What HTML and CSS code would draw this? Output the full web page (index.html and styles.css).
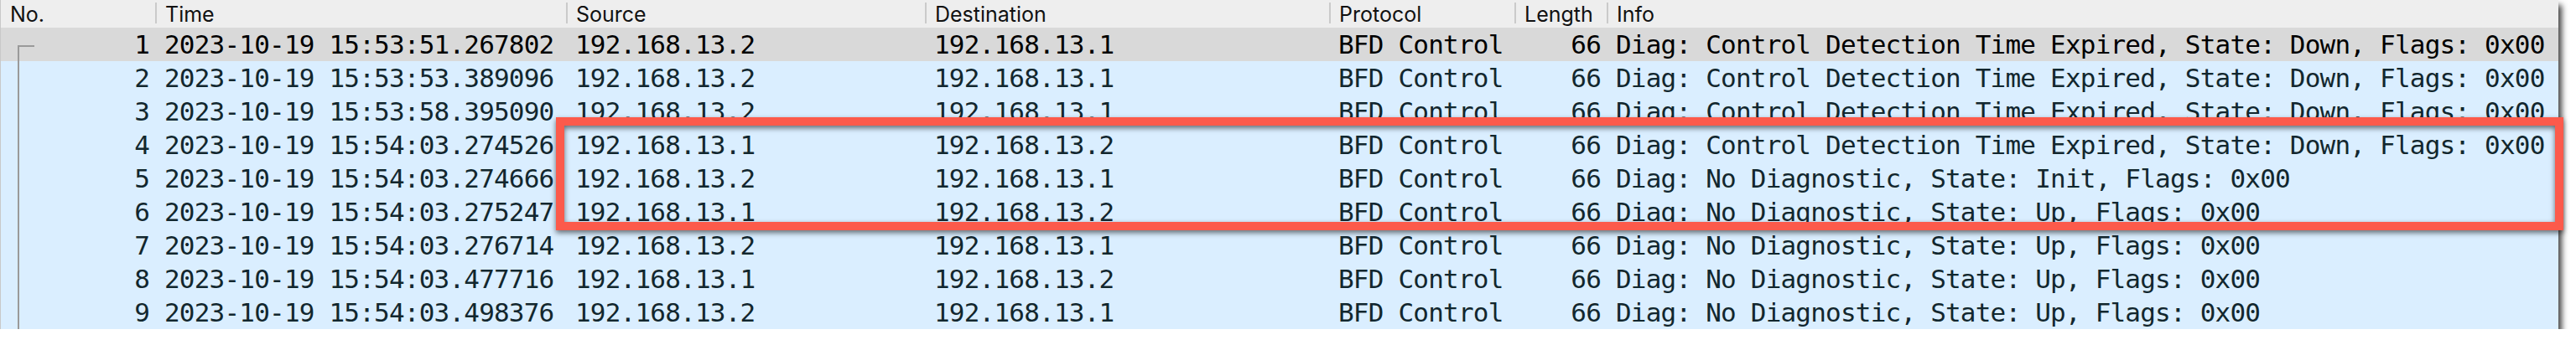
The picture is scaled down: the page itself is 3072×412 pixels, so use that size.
FILE: index.html
```html
<!DOCTYPE html>
<html>
<head>
<meta charset="utf-8">
<link rel="stylesheet" href="styles.css">
</head>
<body>
<div class="window">
  <div class="row head">
    <div class="hc">No.</div>
    <div class="hc sep">Time</div>
    <div class="hc sep">Source</div>
    <div class="hc sep">Destination</div>
    <div class="hc sep">Protocol</div>
    <div class="hc sep">Length</div>
    <div class="hc sep">Info</div>
  </div>

  <div class="row pkt selected">
    <div class="c num first">1</div><div class="c">2023-10-19 15:53:51.267802</div><div class="c">192.168.13.2</div><div class="c">192.168.13.1</div><div class="c">BFD Control</div><div class="c num">66</div><div class="c">Diag: Control Detection Time Expired, State: Down, Flags: 0x00</div>
  </div>
  <div class="row pkt">
    <div class="c num link">2</div><div class="c">2023-10-19 15:53:53.389096</div><div class="c">192.168.13.2</div><div class="c">192.168.13.1</div><div class="c">BFD Control</div><div class="c num">66</div><div class="c">Diag: Control Detection Time Expired, State: Down, Flags: 0x00</div>
  </div>
  <div class="row pkt">
    <div class="c num link">3</div><div class="c">2023-10-19 15:53:58.395090</div><div class="c">192.168.13.2</div><div class="c">192.168.13.1</div><div class="c">BFD Control</div><div class="c num">66</div><div class="c">Diag: Control Detection Time Expired, State: Down, Flags: 0x00</div>
  </div>
  <div class="row pkt">
    <div class="c num link">4</div><div class="c">2023-10-19 15:54:03.274526</div><div class="c">192.168.13.1</div><div class="c">192.168.13.2</div><div class="c">BFD Control</div><div class="c num">66</div><div class="c">Diag: Control Detection Time Expired, State: Down, Flags: 0x00</div>
  </div>
  <div class="row pkt">
    <div class="c num link">5</div><div class="c">2023-10-19 15:54:03.274666</div><div class="c">192.168.13.2</div><div class="c">192.168.13.1</div><div class="c">BFD Control</div><div class="c num">66</div><div class="c">Diag: No Diagnostic, State: Init, Flags: 0x00</div>
  </div>
  <div class="row pkt">
    <div class="c num link">6</div><div class="c">2023-10-19 15:54:03.275247</div><div class="c">192.168.13.1</div><div class="c">192.168.13.2</div><div class="c">BFD Control</div><div class="c num">66</div><div class="c">Diag: No Diagnostic, State: Up, Flags: 0x00</div>
  </div>
  <div class="row pkt">
    <div class="c num link">7</div><div class="c">2023-10-19 15:54:03.276714</div><div class="c">192.168.13.2</div><div class="c">192.168.13.1</div><div class="c">BFD Control</div><div class="c num">66</div><div class="c">Diag: No Diagnostic, State: Up, Flags: 0x00</div>
  </div>
  <div class="row pkt">
    <div class="c num link">8</div><div class="c">2023-10-19 15:54:03.477716</div><div class="c">192.168.13.1</div><div class="c">192.168.13.2</div><div class="c">BFD Control</div><div class="c num">66</div><div class="c">Diag: No Diagnostic, State: Up, Flags: 0x00</div>
  </div>
  <div class="row pkt">
    <div class="c num link">9</div><div class="c">2023-10-19 15:54:03.498376</div><div class="c">192.168.13.2</div><div class="c">192.168.13.1</div><div class="c">BFD Control</div><div class="c num">66</div><div class="c">Diag: No Diagnostic, State: Up, Flags: 0x00</div>
  </div>

  <div class="highlight"></div>
</div>
</body>
</html>
```

FILE: styles.css
```css
html, body {
  margin: 0;
  padding: 0;
  background: #ffffff;
}

.window {
  position: relative;
  width: 3051px;
  background: #daeeff;
  border-left: 1px solid #c9c9c9;
  box-sizing: border-box;
  box-shadow: 4px 6px 7px rgba(0, 0, 0, 0.75);
}

.row {
  display: grid;
  grid-template-columns: 185px 490px 428px 482px 221px 110px 1fr;
}

.head {
  height: 33px;
  background: #eeeeee;
  font-family: Inter, "Liberation Sans", sans-serif;
  font-size: 25px;
  color: #111111;
}

.hc {
  display: flex;
  align-items: center;
  padding-left: 11px;
  position: relative;
  white-space: nowrap;
}

.hc.sep::before {
  content: "";
  position: absolute;
  left: -1px;
  top: 3px;
  width: 2px;
  height: 25px;
  background: #cacaca;
}

.pkt {
  height: 40px;
  font-family: "DejaVu Sans Mono", "Liberation Mono", monospace;
  font-size: 31px;
  letter-spacing: -0.8px;
  color: #12272e;
  background: #daeeff;
}

.pkt.selected {
  background: #d9d9d9;
  color: #000000;
}

.c {
  display: flex;
  align-items: center;
  padding: 0 9px 0 10px;
  white-space: nowrap;
  overflow: visible;
}

.c.num {
  justify-content: flex-end;
  padding-right: 8px;
}

.c.first, .c.link {
  position: relative;
}

.c.first::before {
  content: "";
  position: absolute;
  left: 20px;
  top: 21px;
  bottom: 0;
  width: 18px;
  border-left: 2px solid #9a9a9a;
  border-top: 2px solid #9a9a9a;
}

.c.link::before {
  content: "";
  position: absolute;
  left: 20px;
  top: 0;
  bottom: 0;
  border-left: 2px solid #9a9a9a;
}

.highlight {
  position: absolute;
  left: 662px;
  top: 140px;
  width: 2394px;
  height: 135px;
  box-sizing: border-box;
  border: 10px solid #fc5a4b;
  filter: drop-shadow(0 3px 3px rgba(0, 0, 0, 0.55));
}
```
